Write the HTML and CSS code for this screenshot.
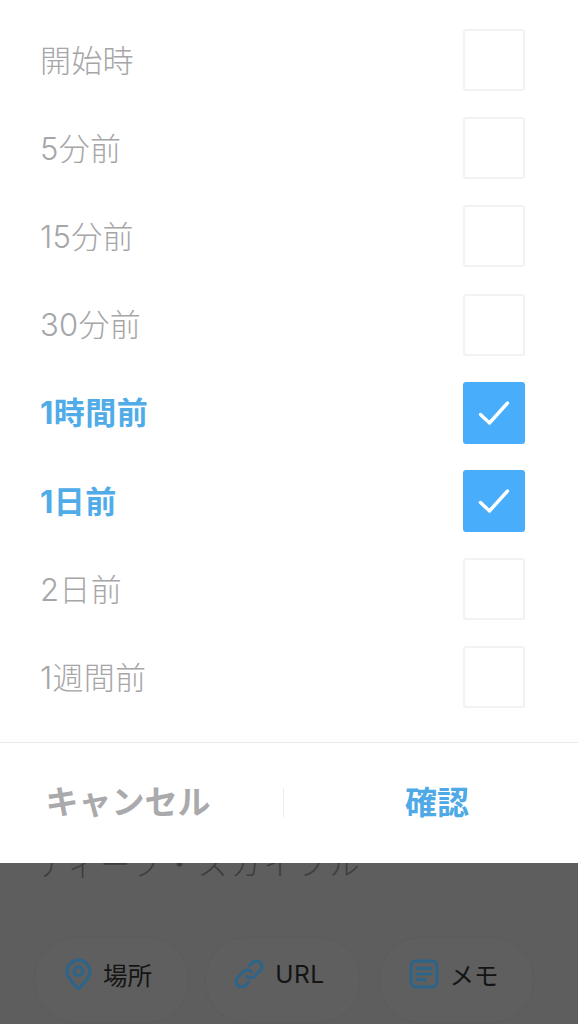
FILE: index.html
```html
<!DOCTYPE html>
<html lang="ja">
<head>
<meta charset="utf-8">
<title>通知</title>
<link rel="stylesheet" href="styles.css">
</head>
<body>
<div class="underlay">
  <div class="under-title"><span class="dot"></span><span>ティーブ・スカイフル</span><span class="edge"></span></div>
  <div class="chips">
    <div class="chip">
      <svg class="icon pin" viewBox="0 0 28 34"><path d="M14 2.2C7.4 2.2 2.2 7.3 2.2 13.7c0 7.6 7.6 14.2 11.8 18 4.2-3.8 11.8-10.4 11.8-18C25.8 7.3 20.6 2.2 14 2.2z"/><circle cx="14" cy="13.6" r="4.4"/></svg>
      <span>場所</span>
    </div>
    <div class="chip">
      <svg class="icon" viewBox="0 0 32 32"><path d="M13.5 18.5a6 6 0 0 0 8.5 0l6-6a6 6 0 0 0-8.5-8.5l-3 3"/><path d="M18.5 13.5a6 6 0 0 0-8.5 0l-6 6a6 6 0 0 0 8.5 8.5l3-3"/></svg>
      <span class="latin">URL</span>
    </div>
    <div class="chip">
      <svg class="icon" viewBox="0 0 32 32"><rect x="2.2" y="2.2" width="27.6" height="27.6" rx="5"/><path d="M8.5 10h15M8.5 16h15M8.5 22h9"/></svg>
      <span>メモ</span>
    </div>
  </div>
</div>
<div class="sheet">
  <ul class="options">
    <li class="option"><span class="label">開始時</span><span class="box"></span></li>
    <li class="option"><span class="label">5分前</span><span class="box"></span></li>
    <li class="option"><span class="label">15分前</span><span class="box"></span></li>
    <li class="option"><span class="label">30分前</span><span class="box"></span></li>
    <li class="option on"><span class="label">1時間前</span><span class="box"><svg viewBox="0 0 32 26"><path d="M2.5 14.5l9 8.5L29.5 3"/></svg></span></li>
    <li class="option on"><span class="label">1日前</span><span class="box"><svg viewBox="0 0 32 26"><path d="M2.5 14.5l9 8.5L29.5 3"/></svg></span></li>
    <li class="option"><span class="label">2日前</span><span class="box"></span></li>
    <li class="option"><span class="label">1週間前</span><span class="box"></span></li>
  </ul>
  <div class="actions">
    <div class="action cancel">キャンセル</div>
    <div class="action confirm">確認</div>
  </div>
</div>
</body>
</html>
```
FILE: styles.css
```css
* { box-sizing: border-box; }
html, body { margin: 0; padding: 0; }
body {
  width: 578px;
  height: 1024px;
  overflow: hidden;
  position: relative;
  background: #5e5e5e;
  font-family: Inter, "Noto Sans CJK JP", "Noto Sans", sans-serif;
}
.underlay {
  height: 1024px;
  display: flex;
  flex-direction: column;
  justify-content: flex-end;
  padding-bottom: 2px;
}
.under-title {
  display: flex;
  align-items: center;
  font-size: 30px;
  font-weight: 300;
  color: #3d3d3d;
  padding-left: 36px;
  height: 40px;
  margin-bottom: 56px;
  position: relative;
  letter-spacing: 3px;
}
.dot {
  position: absolute;
  left: -9px;
  top: 3px;
  width: 14px;
  height: 14px;
  border-radius: 50%;
  background: #2a6f9e;
}
.edge {
  position: absolute;
  right: 0;
  top: 4px;
  width: 2px;
  height: 12px;
  background: #444;
}
.chips {
  display: flex;
  gap: 18px;
  padding-left: 35px;
}
.chip {
  width: 153px;
  height: 84px;
  border-radius: 40px;
  background: #5f5f5f;
  box-shadow: 0 0 2px #5a5a5a;
  display: flex;
  align-items: center;
  justify-content: center;
  gap: 11px;
  padding: 0 6px 12px 0;
  font-size: 24.5px;
  color: #141414;
}
.chip:last-child {
  margin-left: 3px;
}
.latin {
  letter-spacing: 0.6px;
}
.icon {
  width: 30px;
  height: 30px;
  fill: none;
  stroke: #2e6488;
  stroke-width: 3.4;
  stroke-linecap: round;
  stroke-linejoin: round;
}
.pin {
  width: 27px;
  height: 33px;
}
.sheet {
  position: absolute;
  left: 0;
  top: 0;
  width: 578px;
  height: 863px;
  background: #fff;
  display: flex;
  flex-direction: column;
}
.options {
  list-style: none;
  margin: 0;
  padding: 16px 53px 0 40px;
  height: 742px;
}
.option {
  height: 88.2px;
  display: flex;
  align-items: center;
  justify-content: space-between;
  font-size: 31px;
  font-weight: 300;
  color: #a6a6a9;
  letter-spacing: 0.3px;
}
.label {
  padding-bottom: 4px;
}
.option.on {
  color: #50ace9;
  font-weight: 700;
  letter-spacing: 0.5px;
}
.box {
  width: 62px;
  height: 62px;
  border: 2px solid #f2f2f3;
  border-radius: 3px;
  display: flex;
  align-items: center;
  justify-content: center;
}
.on .box {
  background: #48aefb;
  border-color: #48aefb;
}
.box svg {
  width: 32px;
  height: 26px;
  fill: none;
  stroke: #fff;
  stroke-width: 3.4;
  stroke-linecap: round;
  stroke-linejoin: round;
}
.actions {
  flex: 1;
  border-top: 1px solid #e9e9ea;
  display: flex;
  align-items: center;
  padding-bottom: 2px;
}
.action {
  font-size: 33px;
  font-weight: 700;
  text-align: center;
  height: 29px;
  line-height: 29px;
}
.cancel {
  width: 284px;
  padding-right: 27px;
  color: #aaaaad;
  border-right: 1px solid #ececec;
}
.confirm {
  flex: 1;
  padding-left: 12px;
  color: #4fa9e6;
  font-size: 32px;
}
```
